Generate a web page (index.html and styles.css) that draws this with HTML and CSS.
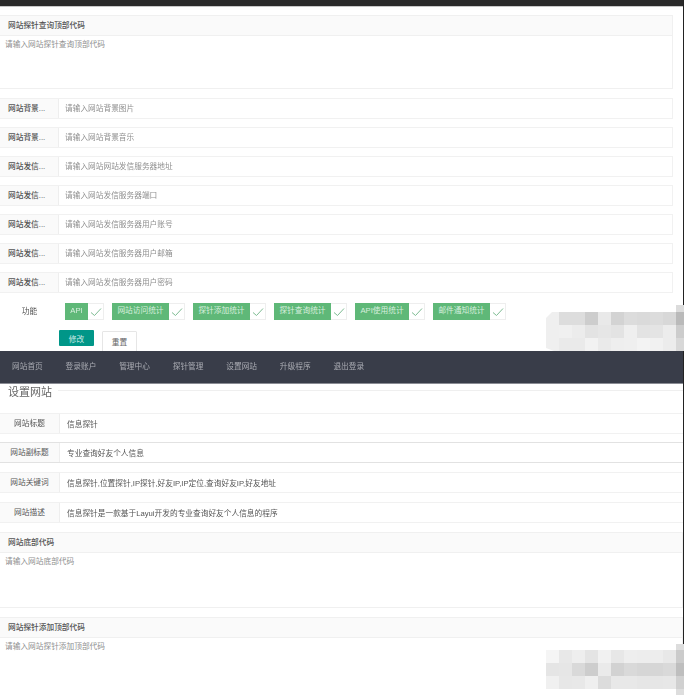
FILE: index.html
```html
<!DOCTYPE html>
<html lang="zh-CN">
<head>
<meta charset="utf-8">
<title>设置网站</title>
<link rel="stylesheet" href="styles.css">
</head>
<body>
<div class="page">
  <div class="topbar"></div>
  <form class="form upper">
    <div class="code"><div class="code-head">网站探针查询顶部代码</div><textarea class="code-body h53" placeholder="请输入网站探针查询顶部代码"></textarea></div>
    <div class="field"><label>网站背景...</label><input placeholder="请输入网站背景图片"></div>
    <div class="field"><label>网站背景...</label><input placeholder="请输入网站背景音乐"></div>
    <div class="field"><label>网站发信...</label><input placeholder="请输入网站网站发信服务器地址"></div>
    <div class="field"><label>网站发信...</label><input placeholder="请输入网站发信服务器端口"></div>
    <div class="field"><label>网站发信...</label><input placeholder="请输入网站发信服务器用户账号"></div>
    <div class="field"><label>网站发信...</label><input placeholder="请输入网站发信服务器用户邮箱"></div>
    <div class="field"><label>网站发信...</label><input placeholder="请输入网站发信服务器用户密码"></div>
    <div class="features">
      <span class="feat-label">功能</span>
      <span class="check"><b class="w23">API</b><i><svg viewBox="0 0 12 10"><path d="M1 5.5 4.5 8.5 11 1.5"/></svg></i></span>
      <span class="check"><b class="w57">网站访问统计</b><i><svg viewBox="0 0 12 10"><path d="M1 5.5 4.5 8.5 11 1.5"/></svg></i></span>
      <span class="check"><b class="w57">探针添加统计</b><i><svg viewBox="0 0 12 10"><path d="M1 5.5 4.5 8.5 11 1.5"/></svg></i></span>
      <span class="check"><b class="w57">探针查询统计</b><i><svg viewBox="0 0 12 10"><path d="M1 5.5 4.5 8.5 11 1.5"/></svg></i></span>
      <span class="check"><b class="w54">API使用统计</b><i><svg viewBox="0 0 12 10"><path d="M1 5.5 4.5 8.5 11 1.5"/></svg></i></span>
      <span class="check"><b class="w57">邮件通知统计</b><i><svg viewBox="0 0 12 10"><path d="M1 5.5 4.5 8.5 11 1.5"/></svg></i></span>
    </div>
    <div class="actions"><button type="button" class="btn-primary">修改</button><button type="button" class="btn-reset">重置</button></div>
  </form>
  <nav class="nav">
    <a>网站首页</a><a>登录账户</a><a>管理中心</a><a>探针管理</a><a>设置网站</a><a>升级程序</a><a>退出登录</a>
  </nav>
  <form class="form lower">
    <div class="legend"><span>设置网站</span></div>
    <div class="field center first"><label>网站标题</label><input value="信息探针"></div>
    <div class="field center focus"><label>网站副标题</label><input value="专业查询好友个人信息"></div>
    <div class="field center"><label>网站关键词</label><input value="信息探针,位置探针,IP探针,好友IP,IP定位,查询好友IP,好友地址"></div>
    <div class="field center"><label>网站描述</label><input value="信息探针是一款基于Layui开发的专业查询好友个人信息的程序"></div>
    <div class="code"><div class="code-head">网站底部代码</div><textarea class="code-body h55" placeholder="请输入网站底部代码"></textarea></div>
    <div class="code"><div class="code-head">网站探针添加顶部代码</div><textarea class="code-body h58" placeholder="请输入网站探针添加顶部代码"></textarea></div>
  </form>
</div>

<svg class="mosaic m1" viewBox="0 0 138 46" aria-hidden="true">
  <rect x="130" y="0" width="8" height="7" fill="#dcdcdc"/>
  <path d="M6 7H13V46H8L0 43V13Z" fill="#efefef"/>
  <rect x="13" y="7" width="13" height="13" fill="#dddddd"/><rect x="26" y="7" width="13" height="13" fill="#dddddd"/><rect x="39" y="7" width="13" height="13" fill="#cdcdcd"/><rect x="52" y="7" width="13" height="13" fill="#e9e9e9"/><rect x="65" y="7" width="13" height="13" fill="#d3d3d3"/><rect x="78" y="7" width="13" height="13" fill="#dcdcdc"/><rect x="91" y="7" width="13" height="13" fill="#dadada"/><rect x="104" y="7" width="13" height="13" fill="#dcdcdc"/><rect x="117" y="7" width="13" height="13" fill="#d8d8d8"/><rect x="130" y="7" width="8" height="13" fill="#bababa"/>
  <rect x="13" y="20" width="13" height="13" fill="#f0f0f0"/><rect x="26" y="20" width="13" height="13" fill="#ececec"/><rect x="39" y="20" width="13" height="13" fill="#e3e3e3"/><rect x="52" y="20" width="13" height="13" fill="#e6e6e6"/><rect x="65" y="20" width="13" height="13" fill="#e3e3e3"/><rect x="78" y="20" width="13" height="13" fill="#efefef"/><rect x="91" y="20" width="13" height="13" fill="#e3e3e3"/><rect x="104" y="20" width="13" height="13" fill="#e4e4e4"/><rect x="117" y="20" width="13" height="13" fill="#ececec"/><rect x="130" y="20" width="8" height="13" fill="#cccccc"/>
  <rect x="13" y="33" width="13" height="13" fill="#eaeaea"/><rect x="26" y="33" width="13" height="13" fill="#eaeaea"/><rect x="39" y="33" width="13" height="13" fill="#f2f2f2"/><rect x="52" y="33" width="13" height="13" fill="#eaeaea"/><rect x="65" y="33" width="13" height="13" fill="#eeeeee"/><rect x="78" y="33" width="13" height="13" fill="#efefef"/><rect x="91" y="33" width="13" height="13" fill="#f3f3f3"/><rect x="104" y="33" width="13" height="13" fill="#f1f1f1"/><rect x="117" y="33" width="13" height="13" fill="#ececec"/><rect x="130" y="33" width="8" height="13" fill="#d8d8d8"/>
</svg>
<svg class="mosaic m2" viewBox="0 0 138 51" aria-hidden="true">
  <rect x="130" y="0" width="8" height="51" fill="#dddddd"/>
  <rect x="0" y="6" width="13" height="13" fill="#f5f5f5"/><rect x="13" y="6" width="13" height="13" fill="#e8e8e8"/><rect x="26" y="6" width="13" height="13" fill="#eeeeee"/><rect x="39" y="6" width="13" height="13" fill="#e4e4e4"/><rect x="52" y="6" width="13" height="13" fill="#f1f1f1"/><rect x="65" y="6" width="13" height="13" fill="#e7e7e7"/><rect x="78" y="6" width="13" height="13" fill="#eeeeee"/><rect x="91" y="6" width="13" height="13" fill="#ededed"/><rect x="104" y="6" width="13" height="13" fill="#ededed"/><rect x="117" y="6" width="13" height="13" fill="#e8e8e8"/><rect x="130" y="6" width="8" height="13" fill="#cbcbcb"/>
  <rect x="0" y="19" width="13" height="13" fill="#e5e5e5"/><rect x="13" y="19" width="13" height="13" fill="#e6e6e6"/><rect x="26" y="19" width="13" height="13" fill="#d9d9d9"/><rect x="39" y="19" width="13" height="13" fill="#cdcdcd"/><rect x="52" y="19" width="13" height="13" fill="#eaeaea"/><rect x="65" y="19" width="13" height="13" fill="#d2d2d2"/><rect x="78" y="19" width="13" height="13" fill="#d9d9d9"/><rect x="91" y="19" width="13" height="13" fill="#d6d6d6"/><rect x="104" y="19" width="13" height="13" fill="#d6d6d6"/><rect x="117" y="19" width="13" height="13" fill="#d9d9d9"/><rect x="130" y="19" width="8" height="13" fill="#bebebe"/>
  <rect x="0" y="32" width="13" height="13" fill="#f0f0f0"/><rect x="13" y="32" width="13" height="13" fill="#e7e7e7"/><rect x="26" y="32" width="13" height="13" fill="#e8e8e8"/><rect x="39" y="32" width="13" height="13" fill="#efefef"/><rect x="52" y="32" width="13" height="13" fill="#dcdcdc"/><rect x="65" y="32" width="13" height="13" fill="#e8e8e8"/><rect x="78" y="32" width="13" height="13" fill="#e8e8e8"/><rect x="91" y="32" width="13" height="13" fill="#e6e6e6"/><rect x="104" y="32" width="13" height="13" fill="#e6e6e6"/><rect x="117" y="32" width="13" height="13" fill="#e7e7e7"/><rect x="130" y="32" width="8" height="13" fill="#d0d0d0"/>
</svg>
</body>
</html>
```
FILE: styles.css
```css
* { box-sizing: border-box; }
html, body { margin: 0; padding: 0; height: 695px; overflow: hidden; background: #fff; }
body { position: relative; font-family: "Liberation Sans", "Noto Sans CJK SC", sans-serif; font-size: 7.7px; color: #555; }
input, textarea, button { font: inherit; outline: none; margin: 0; }
input::placeholder, textarea::placeholder { color: #8f8f8f; opacity: 1; }

.page { width: 684px; height: 695px; overflow: hidden; border-right: 1.5px solid #222; filter: blur(.45px); }
.topbar { height: 7px; background: #2a2a2a; border-bottom: 1px solid #c8c8c8; }

.form { display: flex; flex-direction: column; }
.upper { height: 344px; padding: 8px 10px 0 0; overflow: hidden; }

.code { display: flex; flex-direction: column; margin-bottom: 9px; }
.code-head { height: 21px; line-height: 19px; padding-left: 8px; color: #555; background: #fafafa; border: 1px solid #f0f0f0; border-left: 0; font-weight: 500; }
.code-body { display: block; width: 100%; resize: none; padding: 4px 5px; line-height: 10px; background: #fff; border: 1px solid #f0f0f0; border-top: 0; border-left: 0; }
.h53 { height: 53px; }
.h55 { height: 55px; }
.h58 { height: 60px; }

.field { display: flex; height: 21px; margin-bottom: 8px; border: 1px solid #f1f1f1; border-left: 0; }
.field label { flex: 0 0 59px; line-height: 19px; padding-left: 8px; color: #555; background: #fafafa; border-right: 1px solid #eee; white-space: nowrap; font-weight: 500; }
.field input { flex: 1; min-width: 0; border: 0; padding: 0 0 0 6px; background: #fff; color: #666; }
.center label { flex-basis: 60px; padding-left: 0; text-align: center; font-weight: 400; }
.center input { padding-left: 7px; }
.focus { border-top-color: #e2e2e2; border-bottom-color: #e2e2e2; }

.features { display: flex; align-items: center; gap: 8px; height: 18px; margin-top: 2px; }
.feat-label { flex: 0 0 57px; padding-left: 2px; text-align: center; line-height: 18px; }
.check { display: flex; height: 18px; }
.check b { display: block; height: 17px; padding: 0; line-height: 16px; text-align: center; color: #d8efdf; background: #5fb878; font-weight: 400; }
.w23 { width: 23px; }
.w54 { width: 54px; }
.w57 { width: 57px; }
.check i { display: flex; align-items: center; justify-content: center; width: 16px; height: 17px; border: 1px solid #eee; border-left: 0; }
.check svg { width: 12px; height: 10px; fill: none; stroke: #7dbb92; stroke-width: 1; }

.actions { display: flex; align-items: flex-start; gap: 8px; margin-top: 9px; padding-left: 59px; }
.btn-primary { width: 35px; height: 16px; padding: 0; border: 0; background: #009688; color: #cdeae6; border-radius: 1px; }
.btn-reset { width: 35px; height: 22px; margin-top: 1px; padding: 0 0 2px; border: 1px solid #e6e6e6; background: #fff; color: #666; border-radius: 1px; }

.nav { display: flex; height: 33px; padding-left: 12px; gap: 22.8px; line-height: 31px; background: #393d49; border-bottom: 1px solid #8a8c94; color: #a9abb2; }
.nav a { white-space: nowrap; }

.legend { display: flex; align-items: center; height: 15px; margin: -1px 0 15px; padding-left: 8px; gap: 6px; font-size: 11px; color: #666; }
.legend::after { content: ""; flex: 1; height: 1px; background: #efefef; }
.lower .field { border-right: 0; margin-bottom: 9px; }
.lower .first { margin-bottom: 8px; }
.lower .field input { color: #555; }

.mosaic { position: absolute; right: 0; width: 138px; display: block; }
.m1 { top: 305px; height: 46px; }
.m2 { top: 644px; height: 51px; }
```
